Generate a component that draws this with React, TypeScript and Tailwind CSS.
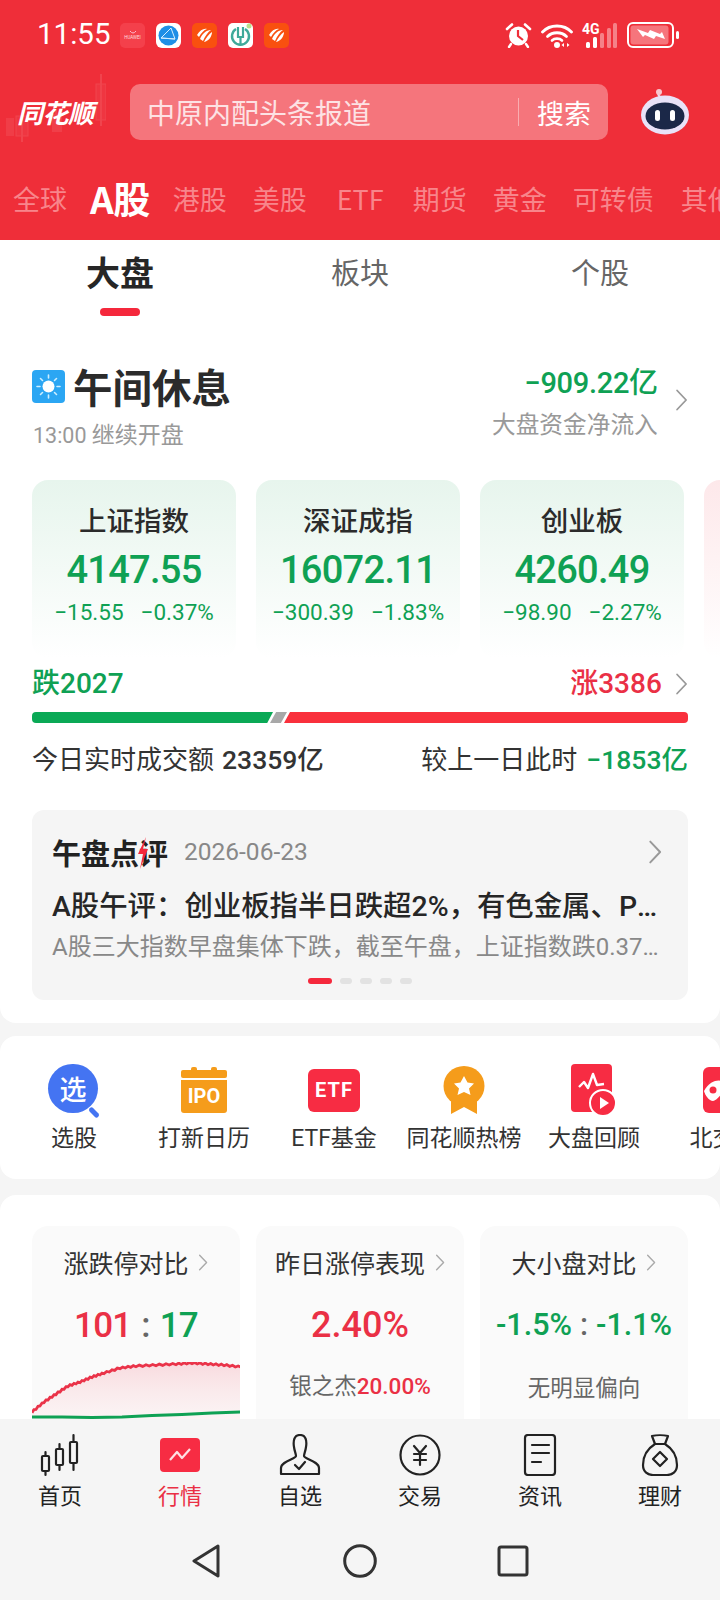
import React from "react";

const GREEN = "text-[#0fa154]";
const RED = "text-[#ea3045]";

function Chevron({ className = "", h = 22, color = "#999" }: { className?: string; h?: number; color?: string }) {
  return (
    <svg className={className} width={h * 0.6} height={h} viewBox="0 0 12 22" fill="none">
      <path d="M1.5 1.5 L10.5 11 L1.5 20.5" stroke={color} strokeWidth="1.8" strokeLinecap="round" strokeLinejoin="round" />
    </svg>
  );
}

function Ths({ className = "" }: { className?: string }) {
  return (
    <svg className={className} width="25" height="25" viewBox="0 0 25 25">
      <rect width="25" height="25" rx="5" fill="#f9500f" />
      <path d="M5 12 C8 7 12 5 15 6 C12 7 9 10 7 14 Z" fill="#fff" />
      <path d="M8 16 C10 11 14 7 19 7 C16 9 13 13 11 18 Z" fill="#fff" />
      <path d="M12 19 C14 15 17 11 20 9 C20 13 17 18 12 19 Z" fill="#fff" />
    </svg>
  );
}

function StatusBar() {
  return (
    <div className="flex h-[70px] items-center pl-[37px] pr-[40px]">
      <span className="w-[83px] text-[29.5px] leading-none font-normal text-white [font-family:Roboto,sans-serif]">11:55</span>
      <div className="flex items-center gap-[11px]">
        <div className="flex h-[25px] w-[25px] flex-col items-center justify-center rounded-[5px] bg-[#f4404b]">
          <svg width="8" height="5" viewBox="0 0 8 5"><path d="M1 1 Q4 5 7 1" stroke="#fbc" fill="none" strokeWidth="1" /></svg>
          <span className="text-[4.5px] leading-[6px] text-[#fdd] [font-family:Roboto,sans-serif]">HUAWEI</span>
        </div>
        <svg width="25" height="25" viewBox="0 0 25 25">
          <rect width="25" height="25" rx="6" fill="#fff" />
          <circle cx="12.5" cy="12.5" r="10" fill="#1e8fe6" />
          <path d="M5 15 L15 5 L19 16 Z M5 15 L19 16" stroke="#d6efff" strokeWidth="1" fill="none" />
        </svg>
        <Ths />
        <svg width="25" height="25" viewBox="0 0 25 25">
          <rect width="25" height="25" rx="5" fill="#fff" />
          <path d="M8 6 A8.5 8.5 0 1 0 17 6" stroke="#3ea99a" strokeWidth="2.4" fill="none" />
          <path d="M10 4 V14 H15 V4 M12.5 14 V22" stroke="#3ea99a" strokeWidth="2.2" fill="none" />
          <circle cx="21" cy="3" r="2.5" fill="#b7e08c" />
        </svg>
        <Ths />
      </div>
      <div className="ml-auto flex items-center">
        <svg width="27" height="25" viewBox="0 0 27 25" fill="none">
          <path d="M2 6 L7 1.5 M25 6 L20 1.5" stroke="#fff" strokeWidth="2.6" strokeLinecap="round" />
          <circle cx="13.5" cy="13" r="9.5" fill="#fff" />
          <path d="M13 7 V13 L18 17" stroke="#ef2e39" strokeWidth="2.2" fill="none" />
          <path d="M6 21 L4 24 M21 21 L23 24" stroke="#fff" strokeWidth="2.4" strokeLinecap="round" />
        </svg>
        <svg className="ml-[9px]" width="32" height="25" viewBox="0 0 32 25" fill="none">
          <path d="M1.5 9 C9 1 23 1 30.5 9" stroke="#fff" strokeWidth="2.8" strokeLinecap="round" />
          <path d="M6.5 13.5 C11.5 8.5 20.5 8.5 25.5 13.5" stroke="#fff" strokeWidth="2.8" strokeLinecap="round" />
          <path d="M11 17.5 C13.5 15 18.5 15 21 17.5" stroke="#fff" strokeWidth="2.6" strokeLinecap="round" />
          <circle cx="16" cy="22" r="3" fill="#fff" />
          <path d="M23 20 V24 L20.5 22 Z M26 20 V24 L28.5 22 Z" fill="#fff" />
        </svg>
        <div className="relative ml-[9px] h-[25px] w-[36px]">
          <span className="absolute top-[-2px] left-0 text-[14px] leading-[16px] font-bold text-white [font-family:Roboto,sans-serif]">4G</span>
          <svg className="absolute top-0 left-0" width="36" height="25" viewBox="0 0 36 25">
            <rect x="4" y="19" width="4" height="6" rx="1.5" fill="#fff" />
            <rect x="11" y="14" width="4" height="11" rx="1.5" fill="#fff" />
            <rect x="18" y="10" width="4" height="15" rx="1.5" fill="#fff" fillOpacity=".4" />
            <rect x="25" y="5" width="4" height="20" rx="1.5" fill="#fff" fillOpacity=".4" />
            <rect x="31" y="0" width="4" height="25" rx="1.5" fill="#fff" fillOpacity=".4" />
          </svg>
        </div>
        <svg className="ml-[9px]" width="53" height="26" viewBox="0 0 53 26" fill="none">
          <rect x="1" y="1" width="45" height="24" rx="5" stroke="#fff" strokeWidth="2" />
          <rect x="3.5" y="3.5" width="38" height="19" rx="3" fill="#f6757c" />
          <path d="M10 7 L21 11 L23 8 L33 12 L35 10 L38 17 L29 14 L27 17 L18 13 L16 15 Z" fill="#fff" />
          <rect x="49" y="9" width="3" height="8" rx="1.5" fill="#fff" />
        </svg>
      </div>
    </div>
  );
}

function SearchRow() {
  return (
    <div className="relative mt-[14px] flex h-[56px] items-center">
      <svg className="absolute top-[-10px] left-[6px]" width="100" height="70" viewBox="0 0 100 70" fill="none" opacity=".1">
        <path d="M95 0 V52 M16 36 V68 M50 36 V48" stroke="#fff" strokeWidth="2" />
        <rect x="90" y="10" width="10" height="36" fill="#fff" fillOpacity=".4" stroke="#fff" />
        <rect x="10" y="42" width="12" height="20" fill="#fff" fillOpacity=".4" stroke="#fff" />
        <rect x="0" y="44" width="8" height="18" fill="#fff" fillOpacity=".7" />
        <rect x="46" y="40" width="10" height="18" fill="#fff" fillOpacity=".8" />
      </svg>
      <span className="relative ml-[17px] w-[113px] text-[26px] leading-none font-bold tracking-[-0.5px] text-white italic [font-family:'Noto_Sans_CJK_SC',sans-serif]">同花顺</span>
      <div className="flex h-[56px] w-[478px] items-center rounded-[10px] bg-[#f5757c] pr-[17px] pl-[17px]">
        <span className="flex-1 text-[28px] leading-none text-[#fde2e4]">中原内配头条报道</span>
        <span className="mr-[18px] h-[28px] w-[1.5px] bg-[#f9adb1]"></span>
        <span className="text-[27px] leading-none text-white">搜索</span>
      </div>
      <svg className="ml-[32px]" width="50" height="46" viewBox="0 0 50 46">
        <path d="M20 8 Q17 5 19 3" stroke="#e8dcf0" strokeWidth="2" fill="none" />
        <circle cx="19" cy="3" r="3" fill="#f9c6cf" />
        <ellipse cx="25" cy="26" rx="24" ry="19.5" fill="#e9e2f8" />
        <ellipse cx="25" cy="27" rx="19.5" ry="13.5" fill="#1b2848" />
        <rect x="15" y="21" width="5" height="11" rx="2.5" fill="#fff" />
        <rect x="30" y="21" width="5" height="11" rx="2.5" fill="#fff" />
      </svg>
    </div>
  );
}

function MarketTabs() {
  const t = "text-[27px] leading-none text-[#f8858b] whitespace-nowrap shrink-0";
  return (
    <div className="mt-[28px] flex h-[60px] items-center overflow-hidden pl-[13px]">
      <span className={t}>全球</span>
      <span className="ml-[23px] shrink-0 text-[37px] leading-none font-bold tracking-[-0.5px] whitespace-nowrap text-white">A股</span>
      <span className={`ml-[23px] ${t}`}>港股</span>
      <span className={`ml-[26px] ${t}`}>美股</span>
      <span className={`ml-[30px] ${t}`}>ETF</span>
      <span className={`ml-[29px] ${t}`}>期货</span>
      <span className={`ml-[26px] ${t}`}>黄金</span>
      <span className={`ml-[26px] ${t}`}>可转债</span>
      <span className={`ml-[27px] ${t}`}>其他</span>
    </div>
  );
}

function IndexCard({ name, price, a, b, tone = "green" }: { name: string; price: string; a: string; b: string; tone?: string }) {
  return (
    <div className={`h-[178px] w-[204px] shrink-0 rounded-[16px] bg-gradient-to-b ${tone === "green" ? "from-[#e7f5ed]" : "from-[#fde8ea]"} to-white text-center`}>
      <div className="mt-[23px] h-[32px] text-[27.5px] leading-[32px] font-medium text-[#2b2b2b]">{name}</div>
      <div className={`mt-[17px] h-[36px] text-[38px] leading-[36px] font-medium tracking-[-0.7px] ${GREEN} [font-family:Roboto,sans-serif]`}>{price}</div>
      <div className={`mt-[10px] flex h-[28px] justify-center gap-[17px] text-[22.5px] leading-[28px] ${GREEN} [font-family:Roboto,sans-serif]`}>
        <span>{a}</span>
        <span>{b}</span>
      </div>
    </div>
  );
}

function MarketSection() {
  return (
    <section className="rounded-b-[16px] bg-white">
      <div className="grid h-[76px] grid-cols-3">
        <div className="relative flex items-start justify-center pt-[10px]">
          <span className="text-[34px] leading-[44px] font-bold text-[#262626]">大盘</span>
          <span className="absolute top-[68px] left-[100px] h-[8px] w-[40px] rounded-full bg-[#f5283c]"></span>
        </div>
        <div className="flex items-start justify-center pt-[10px]">
          <span className="text-[29px] leading-[42px] text-[#666]">板块</span>
        </div>
        <div className="flex items-start justify-center pt-[10px]">
          <span className="text-[29px] leading-[42px] text-[#666]">个股</span>
        </div>
      </div>

      <div className="mt-[48px] flex h-[88px] px-[32px]">
        <div>
          <div className="flex h-[50px] items-center">
            <svg width="33" height="33" viewBox="0 0 33 33" className="-mt-[5px]">
              <rect width="33" height="33" rx="4" fill="#2ba6f3" />
              <circle cx="16.5" cy="16.5" r="6" fill="#fff" />
              <path d="M16.5 5 V8 M16.5 25 V28 M5 16.5 H8 M25 16.5 H28 M8.5 8.5 L10.5 10.5 M22.5 22.5 L24.5 24.5 M24.5 8.5 L22.5 10.5 M10.5 22.5 L8.5 24.5" stroke="#cdeeff" strokeWidth="1.6" strokeLinecap="round" />
            </svg>
            <span className="ml-[8px] -mt-[6px] text-[39.5px] leading-none font-bold text-[#2b2b2b]">午间休息</span>
          </div>
          <div className="mt-[4px] ml-[1px] text-[23px] leading-[30px] whitespace-nowrap text-[#999]">
            <span className="text-[21.5px] [font-family:Roboto,sans-serif]">13:00</span> 继续开盘
          </div>
        </div>
        <div className="ml-auto flex items-center">
          <div className="-mt-[15px] text-right">
            <div className={`text-[29px] leading-[40px] font-medium tracking-[-0.3px] ${GREEN} [font-family:Roboto,'Noto_Sans_CJK_SC',sans-serif]`}>−909.22亿</div>
            <div className="mt-[4px] text-[23.7px] leading-[32px] text-[#999]">大盘资金净流入</div>
          </div>
          <Chevron className="-mt-[16px] ml-[17px]" h={22} />
        </div>
      </div>

      <div className="mt-[28px] flex gap-[20px] overflow-hidden pl-[32px]">
        <IndexCard name="上证指数" price="4147.55" a="−15.55" b="−0.37%" />
        <IndexCard name="深证成指" price="16072.11" a="−300.39" b="−1.83%" />
        <IndexCard name="创业板" price="4260.49" a="−98.90" b="−2.27%" />
        <IndexCard name="" price="" a="" b="" tone="red" />
      </div>

      <div className="mt-[8px] flex h-[36px] items-center px-[32px] text-[28px] leading-none font-medium [font-family:Roboto,'Noto_Sans_CJK_SC',sans-serif]">
        <span className={GREEN}>跌2027</span>
        <span className={`ml-auto ${RED}`}>涨3386</span>
        <Chevron className="ml-[13px]" h={22} />
      </div>

      <div className="mx-[32px] mt-[10px] flex h-[11px] overflow-hidden rounded-[4px]">
        <div className="w-[241px] bg-[#0aa956] [clip-path:polygon(0_0,100%_0,97.6%_100%,0_100%)]"></div>
        <div className="-ml-[3px] w-[17px] bg-[#a8a8a8] [clip-path:polygon(36%_0,100%_0,64%_100%,0_100%)]"></div>
        <div className="-ml-[3px] flex-1 bg-[#f9303c] [clip-path:polygon(6px_0,100%_0,100%_100%,0_100%)]"></div>
      </div>

      <div className="mt-[20px] flex h-[34px] items-center px-[32px] text-[26px] leading-none text-[#333] [font-family:Roboto,'Noto_Sans_CJK_SC',sans-serif]">
        <span>今日实时成交额</span>
        <span className="ml-[8px] text-[26.5px] font-medium">23359亿</span>
        <span className="ml-auto">较上一日此时</span>
        <span className={`ml-[9px] text-[26.5px] font-medium ${GREEN}`}>−1853亿</span>
      </div>

      <div className="mx-[32px] mt-[33px] h-[190px] rounded-[12px] bg-[#f5f5f5] px-[20px] pt-[24px]">
        <div className="flex h-[36px] items-center">
          <span className="relative text-[29px] leading-none font-bold text-[#222]">
            午盘点评
            <svg className="absolute top-[-1px] left-[85px]" width="12" height="32" viewBox="0 0 12 32"><path d="M9 0 L1 17 H6 L3 32 L11 12 H6 Z" fill="#f5283c" /></svg>
          </span>
          <span className="ml-[16px] text-[24.5px] leading-none text-[#888] [font-family:Roboto,sans-serif]">2026-06-23</span>
          <Chevron className="mr-[6px] ml-auto" h={24} color="#999" />
        </div>
        <div className="mt-[17px] h-[40px] w-[612px] truncate text-[28.4px] leading-[40px] font-medium text-[#262626] [font-family:Roboto,'Noto_Sans_CJK_SC',sans-serif]">A股午评：创业板指半日跌超2%，有色金属、PCB板块走低</div>
        <div className="h-[40px] w-[616px] truncate text-[24px] leading-[40px] text-[#888] [font-family:Roboto,'Noto_Sans_CJK_SC',sans-serif]">A股三大指数早盘集体下跌，截至午盘，上证指数跌0.37%，深成指跌1.83%</div>
        <div className="mt-[11px] ml-[256px] flex items-center gap-[8px]">
          <span className="h-[6px] w-[24px] rounded-full bg-[#f5283c]"></span>
          <span className="h-[6px] w-[12px] rounded-full bg-[#e2e2e2]"></span>
          <span className="h-[6px] w-[12px] rounded-full bg-[#e2e2e2]"></span>
          <span className="h-[6px] w-[12px] rounded-full bg-[#e2e2e2]"></span>
          <span className="h-[6px] w-[12px] rounded-full bg-[#e2e2e2]"></span>
        </div>
      </div>
      <div className="h-[23px]"></div>
    </section>
  );
}

function Entry({ label, children }: { label: string; children: React.ReactNode }) {
  return (
    <div className="flex w-[130px] shrink-0 flex-col items-center">
      <div className="flex h-[54px] items-center justify-center">{children}</div>
      <div className="mt-[5px] text-[23px] leading-[34px] whitespace-nowrap text-[#333] [font-family:Roboto,'Noto_Sans_CJK_SC',sans-serif]">{label}</div>
    </div>
  );
}

function QuickEntries() {
  return (
    <section className="mt-[13px] flex h-[143px] overflow-hidden rounded-[16px] bg-white pt-[27px] pl-[9px]">
      <Entry label="选股">
        <div className="relative h-[52px] w-[52px]">
          <div className="flex h-[49px] w-[50px] items-center justify-center rounded-full bg-[#4474f2] text-[27px] leading-none font-medium text-white">选</div>
          <span className="absolute right-[0px] bottom-[1px] h-[5px] w-[12px] rotate-45 rounded-full bg-[#4474f2]"></span>
        </div>
      </Entry>
      <Entry label="打新日历">
        <svg width="46" height="46" viewBox="0 0 46 46">
          <rect x="0" y="3" width="46" height="8" rx="2" fill="#f59c1b" />
          <rect x="10" y="0" width="6" height="6" rx="2" fill="#f59c1b" />
          <rect x="30" y="0" width="6" height="6" rx="2" fill="#f59c1b" />
          <path d="M0 13 H46 V43 Q46 46 43 46 H3 Q0 46 0 43 Z" fill="#f59c1b" />
          <foreignObject x="0" y="15" width="46" height="28">
            <div className="text-center text-[20px] leading-[28px] font-bold text-white [font-family:Roboto,sans-serif]">IPO</div>
          </foreignObject>
        </svg>
      </Entry>
      <Entry label="ETF基金">
        <div className="flex h-[43px] w-[52px] items-center justify-center rounded-[6px] bg-[#f72c43] text-[20px] leading-none font-bold tracking-[1px] text-white [font-family:Roboto,sans-serif]">ETF</div>
      </Entry>
      <Entry label="同花顺热榜">
        <svg width="42" height="48" viewBox="0 0 42 48">
          <path d="M8 28 V48 L21 41 L34 48 V28 Z" fill="#f59c1b" />
          <ellipse cx="21" cy="20" rx="20.5" ry="20" fill="#f59c1b" />
          <path d="M21 10 L24.5 16.5 L31 17.5 L26 22.5 L27.5 29 L21 26 L14.5 29 L16 22.5 L11 17.5 L17.5 16.5 Z" fill="#fff" />
        </svg>
      </Entry>
      <Entry label="大盘回顾">
        <svg width="46" height="52" viewBox="0 0 46 52">
          <rect x="0" y="0" width="41" height="48" rx="4" fill="#f72c43" />
          <path d="M8 23 L13 18 L17 24 L22 10 L26 21 L33 20" stroke="#fff" strokeWidth="2.4" fill="none" strokeLinejoin="round" />
          <circle cx="32" cy="39" r="13" fill="#f72c43" stroke="#fff" strokeWidth="2" />
          <path d="M29 33 L38 39 L29 45 Z" fill="#fff" />
        </svg>
      </Entry>
      <Entry label="北交所">
        <svg width="46" height="46" viewBox="0 0 46 46" className="ml-[4px]">
          <rect x="0" y="0" width="46" height="46" rx="6" fill="#f72c43" />
          <path d="M1 24 C8 12 18 12 22 16 C24 22 14 34 10 34 C6 34 2 28 1 24 Z" fill="#fff" />
          <circle cx="10" cy="23" r="3.5" fill="#f72c43" />
        </svg>
      </Entry>
    </section>
  );
}

function ChartLines() {
  const red: [number, number][] = [[0, 50], [12, 40], [24, 32], [36, 24], [48, 20], [60, 15], [72, 11], [88, 6], [104, 4], [124, 3], [144, 2], [160, 1], [176, 2], [192, 3], [209, 5]];
  const pts: string[] = [];
  red.forEach((p, i) => {
    const n = red[i + 1];
    if (!n) { pts.push(`${p[0]},${p[1]}`); return; }
    for (let k = 0; k < 6; k++) {
      const t = k / 6;
      const j = k % 2 === 0 ? 0.7 : -0.7;
      pts.push(`${(p[0] + (n[0] - p[0]) * t).toFixed(1)},${(p[1] + (n[1] - p[1]) * t + j).toFixed(1)}`);
    }
  });
  const line = pts.join(" ");
  return (
    <svg className="mt-[15px] block" width="209" height="60" viewBox="0 0 209 60" fill="none">
      <defs>
        <linearGradient id="rf" x1="0" y1="0" x2="0" y2="1">
          <stop offset="0" stopColor="#f7c9cf" stopOpacity=".65" />
          <stop offset="1" stopColor="#fde8ea" stopOpacity=".3" />
        </linearGradient>
      </defs>
      <polygon points={`${line} 209,60 0,60`} fill="url(#rf)" />
      <polyline points={line} stroke="#ea3349" strokeWidth="2.8" />
      <polyline points="0,55 30,55 60,55.5 90,55 120,53.5 150,52.5 180,51 209,50" stroke="#0fa154" strokeWidth="3" />
    </svg>
  );
}

function CompareSection() {
  return (
    <section className="mt-[16px] h-[260px] rounded-t-[16px] bg-white px-[32px] pt-[31px]">
      <div className="grid grid-cols-3 gap-[16px]">
        <div className="h-[230px] overflow-hidden rounded-[16px] bg-[#fafafa]">
          <div className="mt-[18px] flex h-[36px] items-center justify-center text-[25px] leading-none text-[#333]">
            涨跌停对比<Chevron className="ml-[10px]" h={17} color="#aaa" />
          </div>
          <div className="mt-[23px] flex h-[44px] items-center justify-center text-[35px] leading-none font-medium tracking-[-0.8px] [font-family:Roboto,sans-serif]">
            <span className={RED}>101</span><span className="mx-[10px] text-[#666]">:</span><span className={GREEN}>17</span>
          </div>
          <ChartLines />
        </div>
        <div className="h-[230px] overflow-hidden rounded-[16px] bg-[#fafafa]">
          <div className="mt-[18px] flex h-[36px] items-center justify-center text-[25px] leading-none text-[#333]">
            昨日涨停表现<Chevron className="ml-[10px]" h={17} color="#aaa" />
          </div>
          <div className={`mt-[23px] flex h-[44px] items-center justify-center text-[36px] leading-none font-medium ${RED} [font-family:Roboto,sans-serif]`}>2.40%</div>
          <div className="mt-[21px] flex h-[36px] items-center justify-center text-[22.5px] leading-none text-[#666] [font-family:Roboto,'Noto_Sans_CJK_SC',sans-serif]">
            银之杰<span className={`font-medium ${RED}`}>20.00%</span>
          </div>
        </div>
        <div className="h-[230px] overflow-hidden rounded-[16px] bg-[#fafafa]">
          <div className="mt-[18px] flex h-[36px] items-center justify-center text-[25px] leading-none text-[#333]">
            大小盘对比<Chevron className="ml-[10px]" h={17} color="#aaa" />
          </div>
          <div className={`mt-[23px] flex h-[44px] items-center justify-center text-[30.5px] leading-none font-medium ${GREEN} [font-family:Roboto,sans-serif]`}>
            -1.5%<span className="mx-[8px] text-[#666]">:</span>-1.1%
          </div>
          <div className="mt-[21px] flex h-[36px] items-center justify-center text-[22.5px] leading-none text-[#666]">无明显偏向</div>
        </div>
      </div>
    </section>
  );
}

function NavItem({ label, active, children }: { label: string; active?: boolean; children: React.ReactNode }) {
  return (
    <div className="flex flex-col items-center">
      <div className="flex h-[44px] items-center justify-center">{children}</div>
      <div className={`text-[22px] leading-[34px] ${active ? "text-[#ea3045]" : "text-[#222]"}`}>{label}</div>
    </div>
  );
}

function BottomNav() {
  const s = { stroke: "#222", strokeWidth: 2.2, fill: "none" as const, strokeLinecap: "round" as const, strokeLinejoin: "round" as const };
  return (
    <nav className="h-[181px] shrink-0 bg-[#f5f5f5]">
      <div className="grid grid-cols-6 pt-[14px]">
        <NavItem label="首页">
          <svg width="40" height="44" viewBox="0 0 40 44">
            <g {...s}>
              <rect x="2" y="23" width="7" height="15" rx="1" /><path d="M5.5 19 V23 M5.5 38 V42" />
              <rect x="16" y="16" width="7" height="16" rx="1" /><path d="M19.5 11 V16 M19.5 32 V37" />
              <rect x="30" y="9" width="7" height="21" rx="1" /><path d="M33.5 2 V9 M33.5 30 V37" />
            </g>
          </svg>
        </NavItem>
        <NavItem label="行情" active>
          <div className="flex h-[34px] w-[40px] items-center justify-center rounded-[4px] bg-[#f72c43]">
            <svg width="22" height="14" viewBox="0 0 22 14" fill="none"><path d="M1 12 L8 4 L13 10 L21 1" stroke="#ffe0e3" strokeWidth="2.2" strokeLinejoin="round" /></svg>
          </div>
        </NavItem>
        <NavItem label="自选">
          <svg width="42" height="42" viewBox="0 0 42 42">
            <g {...s}>
              <path d="M21 1 C15 1 14 7 15 13 C15.5 17 17 20 17 22 C17 25 2 27 2 34 V40 H40 V34 C40 27 25 25 25 22 C25 20 26.5 17 27 13 C28 7 27 1 21 1 Z" />
              <path d="M16 31 L20 35 L26 28" />
            </g>
          </svg>
        </NavItem>
        <NavItem label="交易">
          <svg width="42" height="42" viewBox="0 0 42 42">
            <g {...s}>
              <ellipse cx="21" cy="21" rx="19.5" ry="19.5" />
              <path d="M15 12 L21 19 L27 12 M15 20 H27 M15 26 H27 M21 19 V31" />
            </g>
          </svg>
        </NavItem>
        <NavItem label="资讯">
          <svg width="34" height="42" viewBox="0 0 34 42">
            <g {...s}>
              <rect x="2" y="1" width="30" height="40" rx="3" />
              <path d="M9 11 H26 M9 19 H26 M9 28 H18" />
            </g>
          </svg>
        </NavItem>
        <NavItem label="理财">
          <svg width="38" height="42" viewBox="0 0 38 42">
            <g {...s}>
              <path d="M11 2 C15 1 23 1 27 2 L24 10 H14 Z" />
              <path d="M14 10 C6 15 2 23 2 31 C2 38 7 41 12 41 H26 C31 41 36 38 36 31 C36 23 32 15 24 10" />
              <path d="M19 18 L26 25 L19 32 L12 25 Z" />
            </g>
          </svg>
        </NavItem>
      </div>
      <div className="mt-[33px] flex items-center">
        <svg className="ml-[191px]" width="30" height="34" viewBox="0 0 30 34" fill="none"><path d="M27 2 L3 17 L27 32 Z" stroke="#333" strokeWidth="3" strokeLinejoin="round" /></svg>
        <svg className="ml-[122px]" width="34" height="34" viewBox="0 0 34 34" fill="none"><circle cx="17" cy="17" r="15.3" stroke="#333" strokeWidth="3" /></svg>
        <svg className="ml-[120px]" width="32" height="32" viewBox="0 0 32 32" fill="none"><rect x="2" y="2" width="28" height="28" rx="2" stroke="#333" strokeWidth="3" /></svg>
      </div>
    </nav>
  );
}

export default function App() {
  return (
    <div className="flex h-[1600px] w-[720px] flex-col overflow-hidden bg-[#f5f5f5] [font-family:'Noto_Sans_CJK_SC','Noto_Sans',sans-serif]">
      <header className="h-[240px] shrink-0 bg-[#ef2e39]">
        <StatusBar />
        <SearchRow />
        <MarketTabs />
      </header>
      <main className="min-h-0 flex-1 overflow-hidden">
        <MarketSection />
        <QuickEntries />
        <CompareSection />
      </main>
      <BottomNav />
    </div>
  );
}
